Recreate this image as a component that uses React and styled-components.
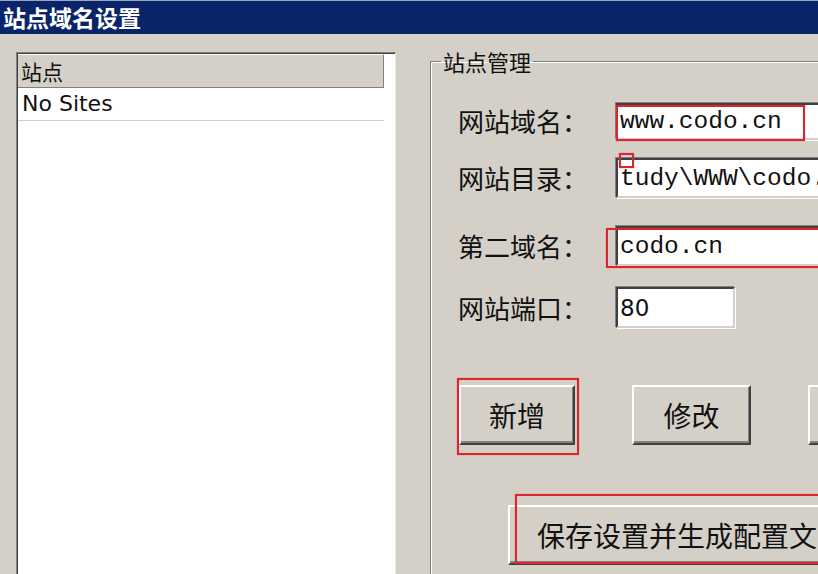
import React from 'react'
import styled, { createGlobalStyle } from 'styled-components'

const GlobalStyle = createGlobalStyle`
  html, body {
    margin: 0;
    padding: 0;
    background: #d4d0c8;
    overflow: hidden;
  }
`

const Window = styled.div`
  width: 818px;
  height: 574px;
  overflow: hidden;
  background: #d4d0c8;
  display: flex;
  flex-direction: column;
  font-family: "Noto Sans CJK SC", sans-serif;
  color: #111;
`

const TitleBar = styled.div`
  flex: none;
  height: 34px;
  box-sizing: border-box;
  border-top: 1px solid #9aa6c4;
  background: #0a246a;
  color: #fff;
  font-weight: 700;
  font-size: 23px;
  line-height: 1;
  display: flex;
  align-items: center;
  padding-left: 3px;
`

const Body = styled.div`
  flex: 1;
  display: flex;
  align-items: flex-start;
  gap: 34px;
  padding: 18px 0 0 16px;
`

const ListView = styled.div`
  flex: none;
  width: 380px;
  height: 560px;
  box-sizing: border-box;
  background: #fff;
  border: 1px solid;
  border-color: #808080 #e8e8e8 #e8e8e8 #808080;
  box-shadow: inset 1px 1px 0 #404040;
  padding: 1px 0 0 1px;
`

const ListHeader = styled.div`
  width: 366px;
  height: 34px;
  box-sizing: border-box;
  background: #d4d0c8;
  border-top: 1px solid #fff;
  border-bottom: 1px solid #808080;
  border-right: 1px solid #808080;
  font-size: 21px;
  line-height: 32px;
  padding-left: 3px;
`

const ListRow = styled.div`
  width: 366px;
  height: 33px;
  box-sizing: border-box;
  border-bottom: 1px solid #d0d0d0;
  font-family: "DejaVu Sans", sans-serif;
  font-size: 22px;
  line-height: 32px;
  padding-left: 4px;
`

const GroupBox = styled.fieldset`
  flex: none;
  margin: -4px 0 0;
  padding: 0;
  width: 480px;
  height: 600px;
  box-sizing: border-box;
  border: 1px solid #808080;
  box-shadow: inset 1px 1px 0 #fff;
  min-width: 0;
`

const Legend = styled.legend`
  margin-left: 10px;
  padding: 0 2px;
  font-size: 22px;
  line-height: 26px;
`

const Form = styled.div`
  display: flex;
  flex-direction: column;
  padding-left: 27px;
`

const Row = styled.div`
  display: flex;
  align-items: center;
  height: ${p => p.$h}px;
  margin-top: ${p => p.$top}px;
`

const Label = styled.div`
  flex: none;
  width: 158px;
  font-size: 26px;
  line-height: 1;
`

const TextBox = styled.div`
  position: relative;
  flex: none;
  width: ${p => p.$w}px;
  height: ${p => p.$h}px;
  box-sizing: border-box;
  background: #fff;
  border: 2px solid;
  border-color: #404040 #d4d0c8 #d4d0c8 #404040;
  box-shadow: -1px -1px 0 #808080, 1px 1px 0 #fff;
  display: flex;
  align-items: center;
  padding-left: 2px;
  font-family: ${p => (p.$sans ? '"DejaVu Sans", sans-serif' : '"Liberation Mono", monospace')};
  font-size: ${p => (p.$sans ? 23 : 24.5)}px;
  white-space: nowrap;
  overflow: visible;
`

const Mark = styled.span`
  position: absolute;
  box-sizing: border-box;
  border: 2px solid #e0242b;
  box-shadow: 0 0 1px rgba(224, 36, 43, 0.6);
  pointer-events: none;
`

const ButtonRow = styled.div`
  display: flex;
  gap: 57px;
  margin-top: 57px;
  padding-left: 1px;
`

const Button = styled.div`
  position: relative;
  flex: none;
  width: ${p => p.$w}px;
  height: 60px;
  box-sizing: border-box;
  background: #d4d0c8;
  border: 2px solid;
  border-color: #fff #404040 #404040 #fff;
  box-shadow: inset -1px -2px 0 #808080;
  display: flex;
  align-items: center;
  justify-content: ${p => (p.$wide ? 'flex-start' : 'center')};
  padding-left: ${p => (p.$wide ? 27 : 0)}px;
  font-size: 28px;
  line-height: 1;
  white-space: nowrap;
`

const WideRow = styled.div`
  display: flex;
  margin-top: 60px;
  padding-left: 50px;
`

export default function App() {
  return (
    <Window>
      <GlobalStyle />
      <TitleBar>站点域名设置</TitleBar>
      <Body>
        <ListView>
          <ListHeader>站点</ListHeader>
          <ListRow>No Sites</ListRow>
        </ListView>

        <GroupBox>
          <Legend>站点管理</Legend>
          <Form>
            <Row $top={28} $h={38}>
              <Label>网站域名：</Label>
              <TextBox $w={260} $h={37}>
                www.codo.cn
                <Mark style={{ left: -2, top: 0, width: 189, height: 36 }} />
              </TextBox>
            </Row>
            <Row $top={18} $h={40}>
              <Label>网站目录：</Label>
              <TextBox $w={260} $h={40}>
                tudy\WWW\codo.
                <Mark style={{ left: 1, top: -7, width: 15, height: 15 }} />
              </TextBox>
            </Row>
            <Row $top={28} $h={40}>
              <Label>第二域名：</Label>
              <TextBox $w={260} $h={40}>
                codo.cn
                <Mark style={{ left: -12, top: 0, width: 300, height: 40 }} />
              </TextBox>
            </Row>
            <Row $top={21} $h={41}>
              <Label>网站端口：</Label>
              <TextBox $w={119} $h={41} $sans>
                80
              </TextBox>
            </Row>

            <ButtonRow>
              <Button $w={116}>
                新增
                <Mark style={{ left: -4, top: -9, width: 122, height: 77 }} />
              </Button>
              <Button $w={119}>修改</Button>
              <Button $w={119} />
            </ButtonRow>

            <WideRow>
              <Button $w={420} $wide>
                保存设置并生成配置文
                <Mark style={{ left: 5, top: -13, width: 420, height: 70 }} />
              </Button>
            </WideRow>
          </Form>
        </GroupBox>
      </Body>
    </Window>
  )
}
